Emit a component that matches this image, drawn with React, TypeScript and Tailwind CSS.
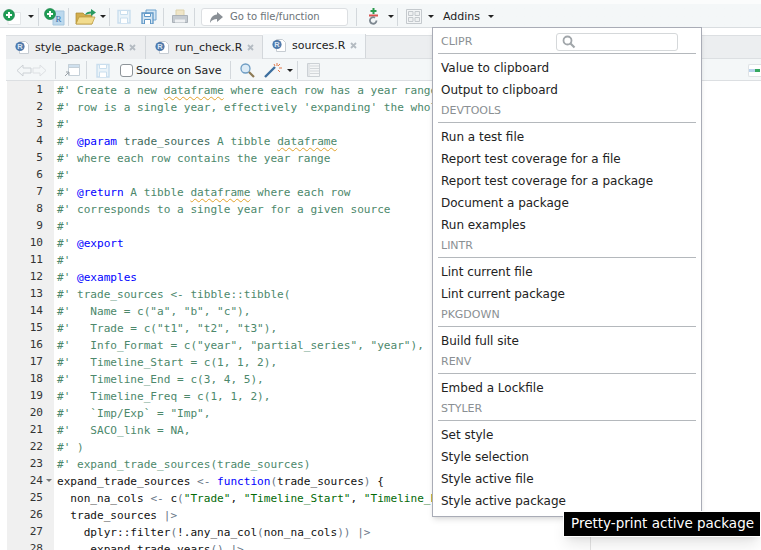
import type { ReactNode } from "react";

type Seg = [string, string];

const C = "text-[#4c886b]";
const T = "text-[#111]";
const K = "text-[#0000ff]";
const O = "text-[#687687]";
const S = "text-[#036a07]";
const P = "text-[#3e6a5c]";
const W = "wavy";

const codeLines: Seg[][] = [
  [[C, "#' Create a new "], [W, "dataframe"], [C, " where each row has a year range, returns a"]],
  [[C, "#' row is a single year, effectively 'expanding' the whole thing"]],
  [[C, "#'"]],
  [[C, "#' "], [K, "@param"], [P, " trade_sources"], [C, " A tibble "], [W, "dataframe"]],
  [[C, "#' where each row contains the year range"]],
  [[C, "#'"]],
  [[C, "#' "], [K, "@return"], [C, " A tibble "], [W, "dataframe"], [C, " where each row"]],
  [[C, "#' corresponds to a single year for a given source"]],
  [[C, "#'"]],
  [[C, "#' "], [K, "@export"]],
  [[C, "#'"]],
  [[C, "#' "], [K, "@examples"]],
  [[C, "#' trade_sources <- tibble::tibble("]],
  [[C, '#\'   Name = c("a", "b", "c"),']],
  [[C, '#\'   Trade = c("t1", "t2", "t3"),']],
  [[C, '#\'   Info_Format = c("year", "partial_series", "year"),']],
  [[C, "#'   Timeline_Start = c(1, 1, 2),"]],
  [[C, "#'   Timeline_End = c(3, 4, 5),"]],
  [[C, "#'   Timeline_Freq = c(1, 1, 2),"]],
  [[C, '#\'   `Imp/Exp` = "Imp",']],
  [[C, "#'   SACO_link = NA,"]],
  [[C, "#' )"]],
  [[C, "#' expand_trade_sources(trade_sources)"]],
  [[T, "expand_trade_sources "], [O, "<-"], [T, " "], [K, "function"], [O, "("], [T, "trade_sources"], [O, ")"], [T, " {"]],
  [[T, "  non_na_cols "], [O, "<-"], [T, " c"], [O, "("], [S, '"Trade"'], [T, ", "], [S, '"Timeline_Start"'], [T, ", "], [S, '"Timeline_End"'], [O, ")"]],
  [[T, "  trade_sources "], [O, "|>"]],
  [[T, "    dplyr::filter"], [O, "("], [T, "!.any_na_col"], [O, "("], [T, "non_na_cols"], [O, "))"], [T, " "], [O, "|>"]],
  [[T, "    .expand_trade_years"], [O, "()"], [T, " "], [O, "|>"]],
];

type MenuItem = { header: string; items: string[] };

const menuGroups: MenuItem[] = [
  { header: "DEVTOOLS", items: ["Run a test file", "Report test coverage for a file", "Report test coverage for a package", "Document a package", "Run examples"] },
  { header: "LINTR", items: ["Lint current file", "Lint current package"] },
  { header: "PKGDOWN", items: ["Build full site"] },
  { header: "RENV", items: ["Embed a Lockfile"] },
  { header: "STYLER", items: ["Set style", "Style selection", "Style active file", "Style active package"] },
];

function Sep({ className }: { className: string }) {
  return <div className={`h-[18px] w-px shrink-0 bg-[#d3d8dc] ${className}`} />;
}

function Caret({ className }: { className: string }) {
  return <div className={`h-0 w-0 shrink-0 border-x-[3px] border-t-[3px] border-x-transparent border-t-[#222] ${className}`} />;
}

function Icon({ w, h, className, children }: { w: number; h: number; className: string; children: ReactNode }) {
  return (
    <svg width={w} height={h} viewBox={`0 0 ${w} ${h}`} className={`shrink-0 ${className}`}>
      {children}
    </svg>
  );
}

function PlusBadge({ cx, cy }: { cx: number; cy: number }) {
  return (
    <g>
      <circle cx={cx} cy={cy} r="5.5" fill="#1f9d55" stroke="#0f7a40" strokeWidth="0.6" />
      <path d={`M${cx - 3} ${cy}h6M${cx} ${cy - 3}v6`} stroke="#fff" strokeWidth="2" />
    </g>
  );
}

function SaveIcon({ className, dim }: { className: string; dim?: boolean }) {
  const c = dim ? "#c9deee" : "#6fa3cf";
  return (
    <Icon w={14} h={15} className={className}>
      <path d="M1 1.5h12v12.5h-12z" fill={dim ? "#eaf3f9" : "#d5e6f3"} stroke={c} strokeWidth="1.4" />
      <path d="M3.5 1.5h7v4h-7z" fill="#fff" stroke={c} />
      <path d="M3.5 14v-5h7v5" fill="#fff" stroke={c} />
    </Icon>
  );
}

function FileRIcon({ className }: { className: string }) {
  return (
    <svg width="15" height="15" viewBox="0 0 15 15" className={`shrink-0 ${className}`}>
      <path d="M4.5 1.5h6l3 3v9h-9z" fill="#fff" stroke="#c6ccd2" />
      <circle cx="5" cy="6.5" r="4.6" fill="#4f79ab" />
      <text x="5" y="9.2" textAnchor="middle" fontSize="7.5" fontWeight="700" fill="#dbe6f2" fontFamily="Liberation Sans">R</text>
    </svg>
  );
}

function TabClose() {
  return (
    <svg width="7" height="7" viewBox="0 0 7 7" className="shrink-0">
      <path d="M1 1l5 5M6 1l-5 5" stroke="#b4bbc2" strokeWidth="1.8" />
    </svg>
  );
}

function Tab({ name, active, className }: { name: string; active?: boolean; className: string }) {
  return (
    <div
      className={`flex items-center border-r border-[#d3d7db] pb-[1px] ${active ? "h-[24px] self-end bg-[#f5f8fa]" : "h-[23px] bg-[#eceef0]"} ${className}`}
    >
      <FileRIcon className="ml-[9px]" />
      <span className="ml-[5px] text-[11px] leading-none text-[#222]">{name}</span>
      <div className="ml-[5px]">
        <TabClose />
      </div>
    </div>
  );
}

function MainToolbar() {
  return (
    <div className="flex h-[28px] items-center border-b border-[#d9dde0] bg-gradient-to-b from-[#fbfcfc] from-15% to-[#f4f7f8] to-15% pt-[6px]">
      <Icon w={18} h={16} className="ml-[3px]">
        <path d="M5 3.5h12.5v12h-12.5z" fill="#fff" stroke="#e3e6e8" />
        <PlusBadge cx={6} cy={6} />
      </Icon>
      <Caret className="ml-[7px]" />
      <Sep className="ml-[4px]" />
      <Icon w={21} h={18} className="ml-[5px]">
        <path d="M9 3h11v14h-11z" fill="#bcd9ee" stroke="#a5c6de" />
        <text x="14.5" y="14" textAnchor="middle" fontSize="9" fill="#3d6fa5" fontFamily="Liberation Serif">R</text>
        <PlusBadge cx={6} cy={6} />
      </Icon>
      <Sep className="ml-[3px]" />
      <Icon w={21} h={16} className="ml-[6px]">
        <path d="M1 4h7l2 2h7v9h-16z" fill="#d2ad4d" stroke="#a9882f" strokeWidth="0.7" />
        <path d="M1 15l3-7h16l-3 7z" fill="#f2dc8e" stroke="#b8963a" strokeWidth="0.7" />
        <path d="M10 6c1-3 3-3.5 6-3.5V0l5 3.5-5 3.5V4.500c-2 0-4 .5-6 1.500z" fill="#2a9a62" />
      </Icon>
      <Caret className="ml-[4px]" />
      <Sep className="ml-[3px]" />
      <SaveIcon className="ml-[7px]" dim />
      <Icon w={16} h={15} className="ml-[10px]">
        <path d="M5 1h10v10h-10z" fill="#d5e6f3" stroke="#6fa3cf" />
        <path d="M1 4h11v11h-11z" fill="#d5e6f3" stroke="#5f97c6" strokeWidth="1.300" />
        <path d="M3.500 4.500h6v3h-6zM3.500 15v-4.500h6V15" fill="#fff" stroke="#5f97c6" />
      </Icon>
      <Sep className="ml-[6px]" />
      <Icon w={16} h={15} className="ml-[8px]">
        <path d="M4 1h8v6h-8z" fill="#f0e6c8" stroke="#ddd2ac" />
        <path d="M.5 6.500h15v7h-15z" fill="#c5cbd1" stroke="#aab1b8" />
        <path d="M3 10.500h10v3h-10z" fill="#eef0f2" />
      </Icon>
      <Sep className="ml-[6px]" />
      <div className="ml-[6px] flex h-[18px] w-[147px] shrink-0 items-center rounded-[3px] border border-[#dcdfe2] bg-white">
        <Icon w={14} h={12} className="ml-[7px]">
          <path d="M8 1l6 5-6 5V8C5 8 2.500 9 1 12c0-5 3-8 7-8.500z" fill="#8a9096" />
        </Icon>
        <span className="ml-[7px] text-[10px] leading-none text-[#6c7378]">Go to file/function</span>
      </div>
      <Sep className="ml-[8px]" />
      <Icon w={13} h={17} className="ml-[10px]">
        <path d="M6.500 0v6M3.500 3h6" stroke="#2a9a4c" strokeWidth="2" />
        <path d="M2 7.500h9" stroke="#d9534f" strokeWidth="2" />
        <path d="M9.500 12.500a3.300 3.300 0 1 1-1.500-2.800" fill="none" stroke="#7d8790" strokeWidth="1.800" />
      </Icon>
      <Caret className="ml-[8px]" />
      <Sep className="ml-[3px]" />
      <Icon w={16} h={15} className="ml-[8px]">
        <path d="M.5.5h15v14h-15z" fill="#f4f6f7" stroke="#c4c9cd" />
        <path d="M2.500 2.500h4.500v4h-4.500zM9 2.500h4.500v4H9zM2.500 8.500h4.500v4h-4.500zM9 8.500h4.500v4H9z" fill="#eef0f1" stroke="#c4c9cd" />
      </Icon>
      <Caret className="ml-[6px]" />
      <span className="ml-[9px] text-[11px] leading-none text-[#222]">Addins</span>
      <Caret className="ml-[8px]" />
    </div>
  );
}

function TabBar() {
  return (
    <div className="ml-[6px] mt-[7px] flex h-[24px] items-start border-y border-[#dcdfe2] bg-[#eceef0]">
      <Tab name="style_package.R" className="w-[140px]" />
      <Tab name="run_check.R" className="w-[117px]" />
      <Tab name="sources.R" active className="w-[103px]" />
    </div>
  );
}

function SourceToolbar() {
  return (
    <div className="ml-[6px] flex h-[22px] items-center border-b border-[#dcdfe2] bg-[#f4f7f8] pt-[1px]">
      <Icon w={31} h={13} className="ml-[10px]">
        <path d="M1 6.500l6-5.500v3h8v5h-8v3z" fill="#f4f7f8" stroke="#ccd1d5" />
        <path d="M30 6.500l-6-5.500v3h-7v5h7v3z" fill="#f4f7f8" stroke="#dde0e3" />
      </Icon>
      <Sep className="ml-[8px]" />
      <Icon w={16} h={14} className="ml-[8px]">
        <path d="M4.500 1.500h11v11h-11z" fill="#fff" stroke="#c5d0d8" />
        <path d="M4.500 1.500h11v3h-11z" fill="#cfe0ee" stroke="#c5d0d8" />
        <path d="M1 13l4-4M2 9h3v3" stroke="#9aa2a8" fill="none" />
      </Icon>
      <Sep className="ml-[6px]" />
      <SaveIcon className="ml-[9px]" dim />
      <div className="ml-[10px] h-[13px] w-[13px] shrink-0 rounded-[3px] border border-[#8d9499] bg-white" />
      <span className="ml-[3px] text-[11px] leading-none text-[#222]">Source on Save</span>
      <Sep className="ml-[9px]" />
      <Icon w={15} h={15} className="ml-[9px]">
        <circle cx="5.500" cy="5.500" r="4.500" fill="#dcebf6" stroke="#6d9cc3" strokeWidth="1.300" />
        <path d="M9 9l5 5" stroke="#8d7a55" strokeWidth="2.200" />
      </Icon>
      <Icon w={18} h={15} className="ml-[9px]">
        <path d="M1 14l10-10" stroke="#3d6f9e" strokeWidth="2.400" />
        <path d="M13 0v3M15 5h3M10 1l1 2M16 1l-2 2M16 9l-2-2" stroke="#e0794a" strokeWidth="1" />
      </Icon>
      <Caret className="ml-[5px]" />
      <Sep className="ml-[4px]" />
      <Icon w={14} h={14} className="ml-[8px]">
        <path d="M1.500.5h12v13h-12z" fill="#f4f6f7" stroke="#ccd1d5" />
        <path d="M4 3h9M4 5.500h9M4 8h9M4 10.500h9M3 1v12" stroke="#d3d7da" />
      </Icon>
      <div className="ml-auto flex h-[13px] w-[13px] items-center rounded-l-[2px] border border-r-0 border-[#dfe3e6] bg-white">
        <div className="h-[3px] w-[6px] bg-[#b9d2ec]" />
        <div className="h-[3px] w-[5px] bg-[#35a860]" />
      </div>
    </div>
  );
}

function Editor() {
  return (
    <div className="relative ml-[7px] flex font-['DejaVu_Sans_Mono'] text-[11.08px] leading-[17px]">
      <div className="w-[47px] shrink-0 bg-[#f0f0f0] pr-[11px] text-right text-[#333]">
        {codeLines.map((_, i) => (
          <div key={i} className="relative h-[17px]">
            {i + 1}
            {i === 23 && <Caret className="absolute right-[-9px] top-[7px] border-t-[#777]" />}
          </div>
        ))}
      </div>
      <div className="min-w-0 flex-1 overflow-hidden pl-[3px] pt-[1px]">
        {codeLines.map((line, i) => (
          <div key={i} className="h-[17px] whitespace-pre">
            {line.map(([cls, text], j) => (
              <span
                key={j}
                className={cls === W ? "text-[#4c886b] underline decoration-[#e2a32c] decoration-wavy decoration-1 underline-offset-2" : cls}
              >
                {text}
              </span>
            ))}
          </div>
        ))}
      </div>
      <div className="absolute bottom-0 left-[583px] top-0 w-px bg-[#e4e4e4]" />
    </div>
  );
}

function MenuHeader({ children }: { children: ReactNode }) {
  return (
    <div className="mx-[5px] flex h-[23px] items-center border-b border-[#b4b8bc] px-[3px] text-[11px] text-[#8a8f93]">
      {children}
    </div>
  );
}

function AddinsMenu() {
  return (
    <div className="absolute left-[432px] top-[27px] h-[490px] w-[270px] border border-[#a9acb6] bg-white pt-[3px] text-[12px] leading-[24px] text-[#222] shadow-md">
      <MenuHeader>
        <span>CLIPR</span>
        <div className="ml-auto mr-[15px] flex h-[18px] w-[122px] items-center rounded-[3px] border border-[#d5d8da] bg-white">
          <Icon w={14} h={14} className="ml-[5px]">
            <circle cx="5.500" cy="5.500" r="4" fill="none" stroke="#a1a6aa" strokeWidth="1.800" />
            <path d="M8.500 8.500l4 4" stroke="#a1a6aa" strokeWidth="2.200" />
          </Icon>
        </div>
      </MenuHeader>
      <div className="mt-[2px] pl-[8px]">
        <div className="h-[22px]">Value to clipboard</div>
        <div className="h-[22px]">Output to clipboard</div>
      </div>
      {menuGroups.map((g) => (
        <div key={g.header}>
          <MenuHeader>{g.header}</MenuHeader>
          <div className="mt-[2px] pl-[8px]">
            {g.items.map((item) => (
              <div key={item} className="h-[22px]">
                {item}
              </div>
            ))}
          </div>
        </div>
      ))}
    </div>
  );
}

export default function App() {
  return (
    <div className="relative h-[550px] w-[761px] overflow-hidden bg-white font-['DejaVu_Sans',sans-serif]">
      <MainToolbar />
      <TabBar />
      <SourceToolbar />
      <Editor />
      <AddinsMenu />
      <div className="absolute left-[563px] top-[511px] flex h-[26px] w-[198px] items-center border border-white bg-black pl-[7px] text-[13.500px] leading-none text-white shadow-lg">
        Pretty-print active package
      </div>
    </div>
  );
}
